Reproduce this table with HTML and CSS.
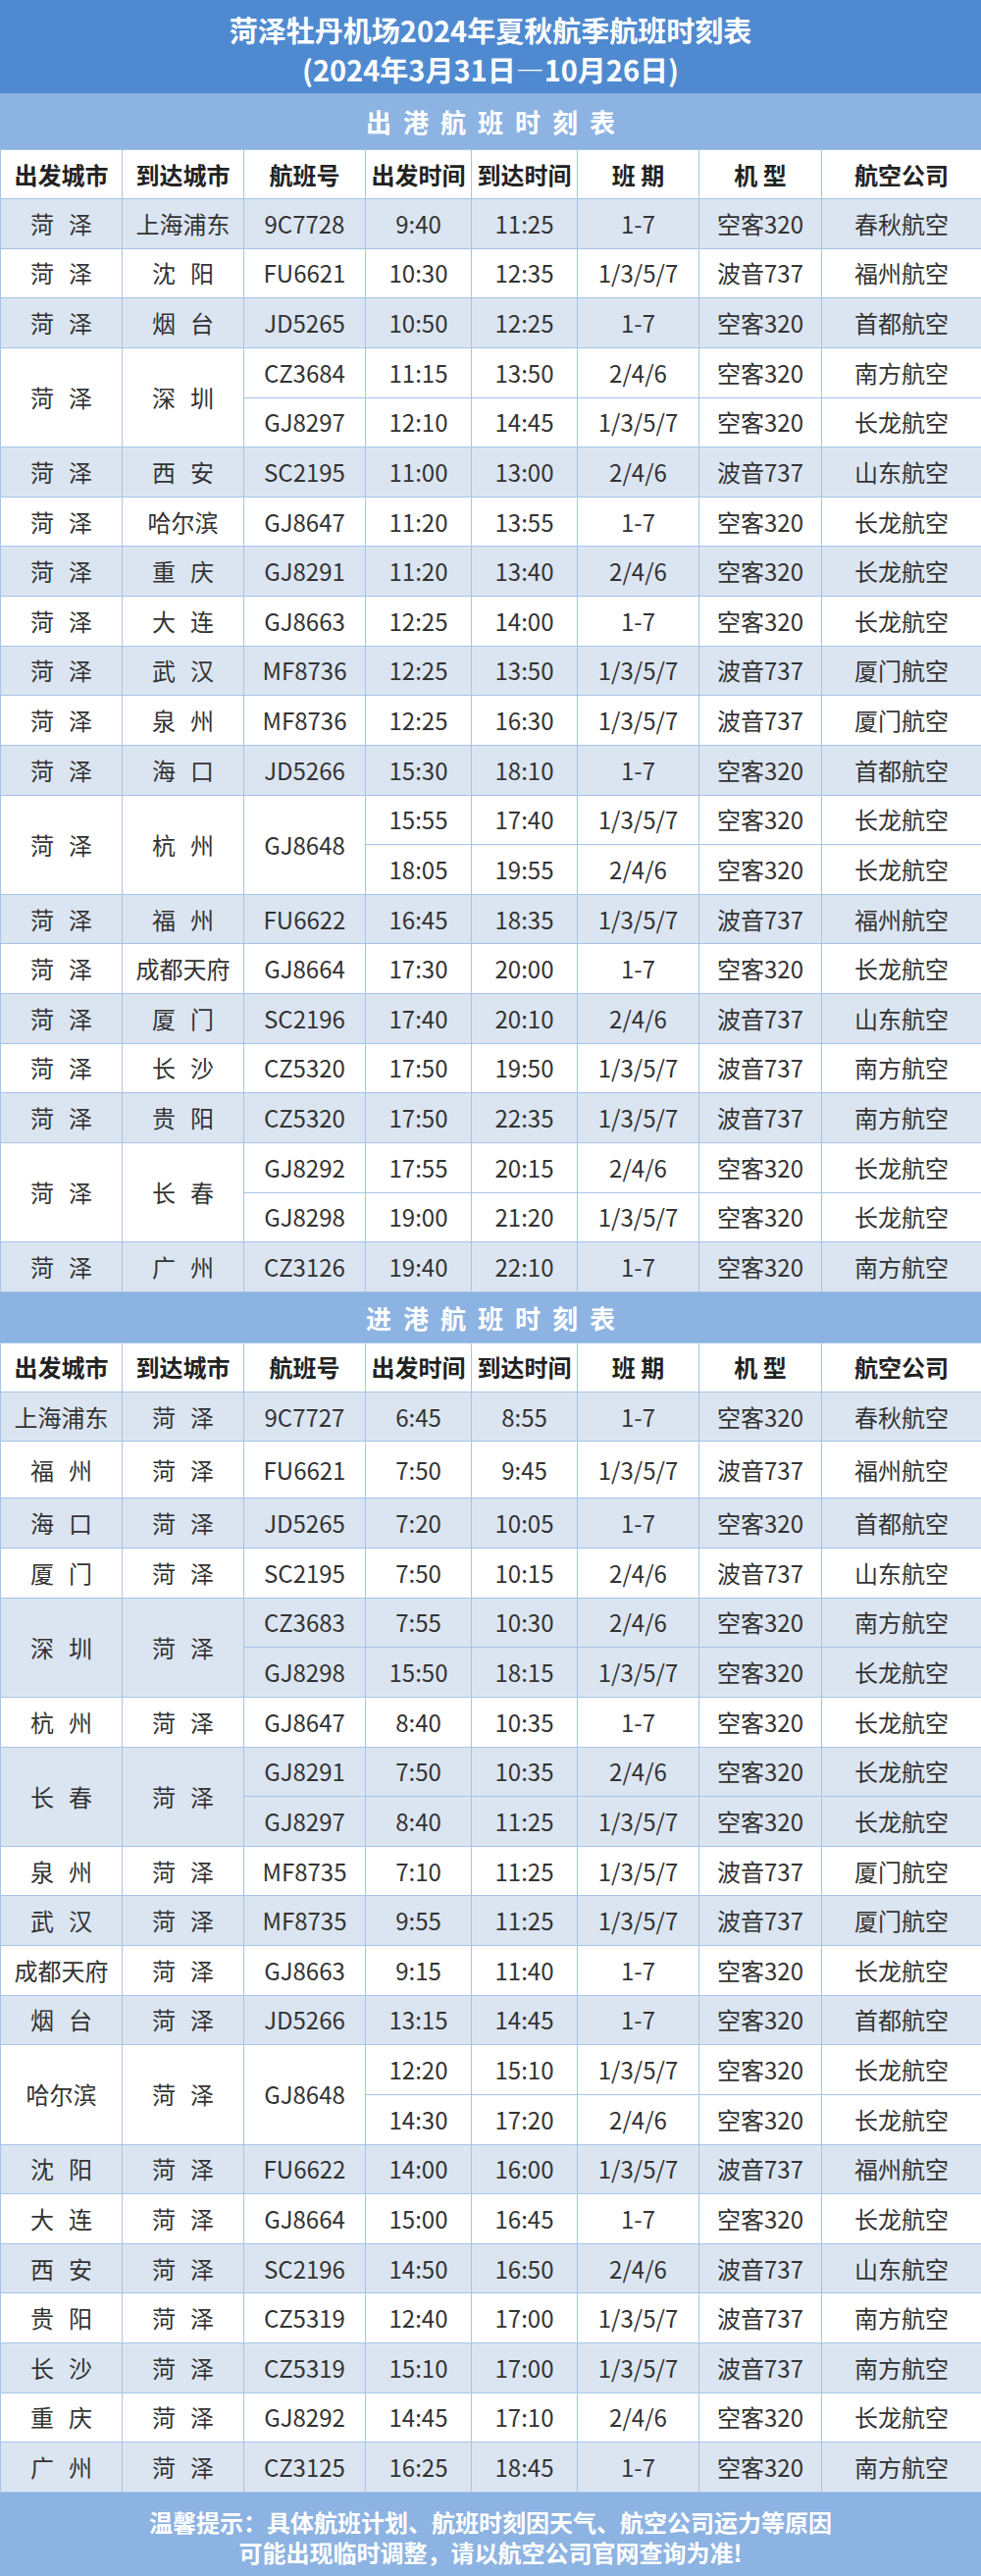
FILE: index.html
```html
<!DOCTYPE html>
<html lang="zh-CN">
<head>
<meta charset="utf-8">
<title>菏泽牡丹机场2024年夏秋航季航班时刻表</title>
<link rel="stylesheet" href="styles.css">
</head>
<body>
<div class="title">
  <div>菏泽牡丹机场2024年夏秋航季航班时刻表</div>
  <div>(2024年3月31日—10月26日)</div>
</div>

<div class="band band-out">出港航班时刻表</div>
<table class="sched">
  <colgroup>
    <col class="c1"><col class="c2"><col class="c3"><col class="c4"><col class="c5"><col class="c6"><col class="c7"><col class="c8">
  </colgroup>
  <tr class="head"><th>出发城市</th><th>到达城市</th><th>航班号</th><th>出发时间</th><th>到达时间</th><th>班 期</th><th>机 型</th><th>航空公司</th></tr>
  <tr class="s"><td><span class="sp">菏泽</span></td><td>上海浦东</td><td>9C7728</td><td>9:40</td><td>11:25</td><td>1-7</td><td>空客320</td><td>春秋航空</td></tr>
  <tr><td><span class="sp">菏泽</span></td><td><span class="sp">沈阳</span></td><td>FU6621</td><td>10:30</td><td>12:35</td><td>1/3/5/7</td><td>波音737</td><td>福州航空</td></tr>
  <tr class="s"><td><span class="sp">菏泽</span></td><td><span class="sp">烟台</span></td><td>JD5265</td><td>10:50</td><td>12:25</td><td>1-7</td><td>空客320</td><td>首都航空</td></tr>
  <tr><td rowspan="2"><span class="sp">菏泽</span></td><td rowspan="2"><span class="sp">深圳</span></td><td>CZ3684</td><td>11:15</td><td>13:50</td><td>2/4/6</td><td>空客320</td><td>南方航空</td></tr>
  <tr><td>GJ8297</td><td>12:10</td><td>14:45</td><td>1/3/5/7</td><td>空客320</td><td>长龙航空</td></tr>
  <tr class="s"><td><span class="sp">菏泽</span></td><td><span class="sp">西安</span></td><td>SC2195</td><td>11:00</td><td>13:00</td><td>2/4/6</td><td>波音737</td><td>山东航空</td></tr>
  <tr><td><span class="sp">菏泽</span></td><td>哈尔滨</td><td>GJ8647</td><td>11:20</td><td>13:55</td><td>1-7</td><td>空客320</td><td>长龙航空</td></tr>
  <tr class="s"><td><span class="sp">菏泽</span></td><td><span class="sp">重庆</span></td><td>GJ8291</td><td>11:20</td><td>13:40</td><td>2/4/6</td><td>空客320</td><td>长龙航空</td></tr>
  <tr><td><span class="sp">菏泽</span></td><td><span class="sp">大连</span></td><td>GJ8663</td><td>12:25</td><td>14:00</td><td>1-7</td><td>空客320</td><td>长龙航空</td></tr>
  <tr class="s"><td><span class="sp">菏泽</span></td><td><span class="sp">武汉</span></td><td>MF8736</td><td>12:25</td><td>13:50</td><td>1/3/5/7</td><td>波音737</td><td>厦门航空</td></tr>
  <tr><td><span class="sp">菏泽</span></td><td><span class="sp">泉州</span></td><td>MF8736</td><td>12:25</td><td>16:30</td><td>1/3/5/7</td><td>波音737</td><td>厦门航空</td></tr>
  <tr class="s"><td><span class="sp">菏泽</span></td><td><span class="sp">海口</span></td><td>JD5266</td><td>15:30</td><td>18:10</td><td>1-7</td><td>空客320</td><td>首都航空</td></tr>
  <tr><td rowspan="2"><span class="sp">菏泽</span></td><td rowspan="2"><span class="sp">杭州</span></td><td rowspan="2">GJ8648</td><td>15:55</td><td>17:40</td><td>1/3/5/7</td><td>空客320</td><td>长龙航空</td></tr>
  <tr><td>18:05</td><td>19:55</td><td>2/4/6</td><td>空客320</td><td>长龙航空</td></tr>
  <tr class="s"><td><span class="sp">菏泽</span></td><td><span class="sp">福州</span></td><td>FU6622</td><td>16:45</td><td>18:35</td><td>1/3/5/7</td><td>波音737</td><td>福州航空</td></tr>
  <tr><td><span class="sp">菏泽</span></td><td>成都天府</td><td>GJ8664</td><td>17:30</td><td>20:00</td><td>1-7</td><td>空客320</td><td>长龙航空</td></tr>
  <tr class="s"><td><span class="sp">菏泽</span></td><td><span class="sp">厦门</span></td><td>SC2196</td><td>17:40</td><td>20:10</td><td>2/4/6</td><td>波音737</td><td>山东航空</td></tr>
  <tr><td><span class="sp">菏泽</span></td><td><span class="sp">长沙</span></td><td>CZ5320</td><td>17:50</td><td>19:50</td><td>1/3/5/7</td><td>波音737</td><td>南方航空</td></tr>
  <tr class="s"><td><span class="sp">菏泽</span></td><td><span class="sp">贵阳</span></td><td>CZ5320</td><td>17:50</td><td>22:35</td><td>1/3/5/7</td><td>波音737</td><td>南方航空</td></tr>
  <tr><td rowspan="2"><span class="sp">菏泽</span></td><td rowspan="2"><span class="sp">长春</span></td><td>GJ8292</td><td>17:55</td><td>20:15</td><td>2/4/6</td><td>空客320</td><td>长龙航空</td></tr>
  <tr><td>GJ8298</td><td>19:00</td><td>21:20</td><td>1/3/5/7</td><td>空客320</td><td>长龙航空</td></tr>
  <tr class="s"><td><span class="sp">菏泽</span></td><td><span class="sp">广州</span></td><td>CZ3126</td><td>19:40</td><td>22:10</td><td>1-7</td><td>空客320</td><td>南方航空</td></tr>
</table>

<div class="band band-in">进港航班时刻表</div>
<table class="sched">
  <colgroup>
    <col class="c1"><col class="c2"><col class="c3"><col class="c4"><col class="c5"><col class="c6"><col class="c7"><col class="c8">
  </colgroup>
  <tr class="head"><th>出发城市</th><th>到达城市</th><th>航班号</th><th>出发时间</th><th>到达时间</th><th>班 期</th><th>机 型</th><th>航空公司</th></tr>
  <tr class="s"><td>上海浦东</td><td><span class="sp">菏泽</span></td><td>9C7727</td><td>6:45</td><td>8:55</td><td>1-7</td><td>空客320</td><td>春秋航空</td></tr>
  <tr class="tall"><td><span class="sp">福州</span></td><td><span class="sp">菏泽</span></td><td>FU6621</td><td>7:50</td><td>9:45</td><td>1/3/5/7</td><td>波音737</td><td>福州航空</td></tr>
  <tr class="s"><td><span class="sp">海口</span></td><td><span class="sp">菏泽</span></td><td>JD5265</td><td>7:20</td><td>10:05</td><td>1-7</td><td>空客320</td><td>首都航空</td></tr>
  <tr><td><span class="sp">厦门</span></td><td><span class="sp">菏泽</span></td><td>SC2195</td><td>7:50</td><td>10:15</td><td>2/4/6</td><td>波音737</td><td>山东航空</td></tr>
  <tr class="s"><td rowspan="2"><span class="sp">深圳</span></td><td rowspan="2"><span class="sp">菏泽</span></td><td>CZ3683</td><td>7:55</td><td>10:30</td><td>2/4/6</td><td>空客320</td><td>南方航空</td></tr>
  <tr class="s"><td>GJ8298</td><td>15:50</td><td>18:15</td><td>1/3/5/7</td><td>空客320</td><td>长龙航空</td></tr>
  <tr><td><span class="sp">杭州</span></td><td><span class="sp">菏泽</span></td><td>GJ8647</td><td>8:40</td><td>10:35</td><td>1-7</td><td>空客320</td><td>长龙航空</td></tr>
  <tr class="s"><td rowspan="2"><span class="sp">长春</span></td><td rowspan="2"><span class="sp">菏泽</span></td><td>GJ8291</td><td>7:50</td><td>10:35</td><td>2/4/6</td><td>空客320</td><td>长龙航空</td></tr>
  <tr class="s"><td>GJ8297</td><td>8:40</td><td>11:25</td><td>1/3/5/7</td><td>空客320</td><td>长龙航空</td></tr>
  <tr><td><span class="sp">泉州</span></td><td><span class="sp">菏泽</span></td><td>MF8735</td><td>7:10</td><td>11:25</td><td>1/3/5/7</td><td>波音737</td><td>厦门航空</td></tr>
  <tr class="s"><td><span class="sp">武汉</span></td><td><span class="sp">菏泽</span></td><td>MF8735</td><td>9:55</td><td>11:25</td><td>1/3/5/7</td><td>波音737</td><td>厦门航空</td></tr>
  <tr><td>成都天府</td><td><span class="sp">菏泽</span></td><td>GJ8663</td><td>9:15</td><td>11:40</td><td>1-7</td><td>空客320</td><td>长龙航空</td></tr>
  <tr class="s"><td><span class="sp">烟台</span></td><td><span class="sp">菏泽</span></td><td>JD5266</td><td>13:15</td><td>14:45</td><td>1-7</td><td>空客320</td><td>首都航空</td></tr>
  <tr><td rowspan="2">哈尔滨</td><td rowspan="2"><span class="sp">菏泽</span></td><td rowspan="2">GJ8648</td><td>12:20</td><td>15:10</td><td>1/3/5/7</td><td>空客320</td><td>长龙航空</td></tr>
  <tr><td>14:30</td><td>17:20</td><td>2/4/6</td><td>空客320</td><td>长龙航空</td></tr>
  <tr class="s"><td><span class="sp">沈阳</span></td><td><span class="sp">菏泽</span></td><td>FU6622</td><td>14:00</td><td>16:00</td><td>1/3/5/7</td><td>波音737</td><td>福州航空</td></tr>
  <tr><td><span class="sp">大连</span></td><td><span class="sp">菏泽</span></td><td>GJ8664</td><td>15:00</td><td>16:45</td><td>1-7</td><td>空客320</td><td>长龙航空</td></tr>
  <tr class="s"><td><span class="sp">西安</span></td><td><span class="sp">菏泽</span></td><td>SC2196</td><td>14:50</td><td>16:50</td><td>2/4/6</td><td>波音737</td><td>山东航空</td></tr>
  <tr><td><span class="sp">贵阳</span></td><td><span class="sp">菏泽</span></td><td>CZ5319</td><td>12:40</td><td>17:00</td><td>1/3/5/7</td><td>波音737</td><td>南方航空</td></tr>
  <tr class="s"><td><span class="sp">长沙</span></td><td><span class="sp">菏泽</span></td><td>CZ5319</td><td>15:10</td><td>17:00</td><td>1/3/5/7</td><td>波音737</td><td>南方航空</td></tr>
  <tr><td><span class="sp">重庆</span></td><td><span class="sp">菏泽</span></td><td>GJ8292</td><td>14:45</td><td>17:10</td><td>2/4/6</td><td>空客320</td><td>长龙航空</td></tr>
  <tr class="s"><td><span class="sp">广州</span></td><td><span class="sp">菏泽</span></td><td>CZ3125</td><td>16:25</td><td>18:45</td><td>1-7</td><td>空客320</td><td>南方航空</td></tr>
</table>

<div class="note">
  <div>温馨提示：具体航班计划、航班时刻因天气、航空公司运力等原因</div>
  <div>可能出现临时调整，请以航空公司官网查询为准!</div>
</div>
</body>
</html>
```

FILE: styles.css
```css
html, body {
  margin: 0;
  padding: 0;
}

body {
  width: 1000px;
  background: #ffffff;
  color: #333333;
  font-family: "Noto Sans CJK SC", "Noto Sans", sans-serif;
}

.title {
  box-sizing: border-box;
  height: 95px;
  padding-top: 10px;
  background: #4f8ad1;
  color: #ffffff;
  font-size: 29px;
  font-weight: 700;
  line-height: 40px;
  text-align: center;
}

.band {
  box-sizing: border-box;
  background: #8db3e2;
  color: #ffffff;
  font-size: 26px;
  font-weight: 700;
  letter-spacing: 12px;
  padding-left: 12px;
  text-align: center;
}

.band-out {
  height: 57px;
  line-height: 57px;
}

.band-in {
  height: 51px;
  line-height: 51px;
}

.sched {
  width: 1000px;
  border-collapse: collapse;
  table-layout: fixed;
}

.c1, .c2, .c3, .c6 { width: 124px; }
.c4, .c5 { width: 108px; }
.c7 { width: 125px; }
.c8 { width: 163px; }

.sched th,
.sched td {
  border: 1px solid #a6c3e9;
  padding: 0;
  text-align: center;
  vertical-align: middle;
  font-size: 24px;
  line-height: 30px;
  white-space: nowrap;
}

.sched th {
  color: #222222;
  font-weight: 700;
  background: #ffffff;
}

.sched td {
  font-weight: 400;
  color: #333333;
  background: #ffffff;
}

.sched tr {
  height: 50.64px;
}

.sched tr.head {
  height: 50px;
}

.sched tr.tall {
  height: 58px;
}

.sched tr.s td {
  background: #dbe5f1;
}

.sp {
  letter-spacing: 15px;
  padding-left: 15px;
}

.note {
  box-sizing: border-box;
  height: 88px;
  padding-top: 14px;
  background: #8db3e2;
  color: #ffffff;
  font-size: 24px;
  font-weight: 700;
  line-height: 31px;
  text-align: center;
}
```
